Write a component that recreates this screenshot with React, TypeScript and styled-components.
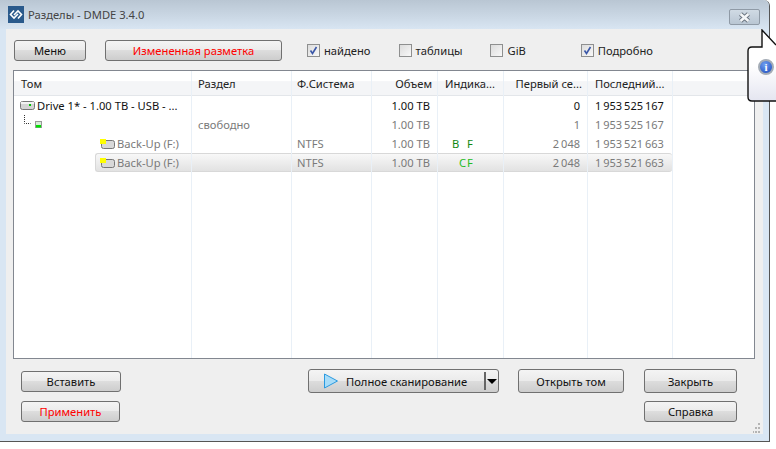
import React from 'react';
import styled, { createGlobalStyle } from 'styled-components';

const GlobalStyle = createGlobalStyle`
  html, body {
    margin: 0;
    background: #fff;
  }
  body {
    width: 776px;
    height: 449px;
    overflow: hidden;
    font-family: "Noto Sans", "Liberation Sans", sans-serif;
    font-size: 11.2px;
    color: #111;
  }
`;

const Page = styled.div`
  position: relative;
  width: 776px;
  height: 449px;
`;

const Window = styled.div`
  width: 770px;
  height: 442px;
  box-sizing: border-box;
  display: flex;
  flex-direction: column;
  background: #d9e6f3;
  border-right: 1px solid #555;
  border-bottom: 1px solid #555;
  border-top-right-radius: 6px;
`;

const TitleBar = styled.div`
  height: 29px;
  flex: none;
  display: flex;
  align-items: center;
  gap: 4px;
  padding: 0 9px 0 8px;
  background: linear-gradient(#b9c6d3, #d8e5f2);
  border-top-right-radius: 6px;
  color: #444;
`;

const Title = styled.span`
  flex: 1;
`;

const CloseButton = styled.div`
  width: 31px;
  height: 16px;
  box-sizing: border-box;
  margin-top: 5px;
  border: 1px solid #8f9aa6;
  border-radius: 2px;
  background: linear-gradient(#d0dae4, #b9c6d3);
  display: flex;
  align-items: center;
  justify-content: center;
`;

const Client = styled.div`
  flex: 1;
  margin: 0 6px 7px;
  background: #efefef;
  display: flex;
  flex-direction: column;
  position: relative;
`;

const Toolbar = styled.div`
  height: 41px;
  flex: none;
  display: flex;
  align-items: center;
  padding: 2px 0 0 8px;
  box-sizing: border-box;
`;

const Button = styled.button<{ $width: number; $red?: boolean; $tall?: boolean; $gap?: number }>`
  width: ${p => p.$width}px;
  height: ${p => (p.$tall ? 24 : 21)}px;
  margin-left: ${p => p.$gap ?? 0}px;
  flex: none;
  padding: 0;
  box-sizing: border-box;
  border: 1px solid #707070;
  border-radius: 3px;
  background: linear-gradient(#f4f4f4 0, #ebebeb 48%, #dddddd 50%, #cdcdcd 100%);
  color: ${p => (p.$red ? '#ff0000' : '#111')};
  font: inherit;
  white-space: nowrap;
  display: flex;
  align-items: center;
  justify-content: center;
`;

const CheckLabel = styled.label<{ $left: number }>`
  margin-left: ${p => p.$left}px;
  display: flex;
  align-items: center;
  gap: 4px;
  color: #222;
`;

const CheckBox = styled.span`
  width: 11px;
  height: 11px;
  border: 1px solid #8e8f8f;
  background: linear-gradient(135deg, #dcdcdc, #f8f8f8);
  display: flex;
  align-items: center;
  justify-content: center;
`;

const TableBox = styled.div`
  margin: 0 8px 0 7px;
  height: 289px;
  flex: none;
  box-sizing: border-box;
  border: 1px solid #828790;
  background: #fff;
  display: flex;
  overflow: hidden;
`;

const TableColumn = styled.div<{ $width?: number }>`
  ${p => (p.$width ? `width: ${p.$width}px; flex: none;` : 'flex: 1;')}
  display: flex;
  flex-direction: column;
  border-right: 1px solid #e9f0f7;
  box-sizing: border-box;
  &:last-child {
    border-right: none;
  }
`;

const HeaderCell = styled.div<{ $align: string; $pad: number }>`
  height: 25px;
  flex: none;
  box-sizing: border-box;
  padding: 1px 5px 0 ${p => p.$pad}px;
  display: flex;
  align-items: center;
  justify-content: ${p => p.$align};
  background: linear-gradient(#ffffff 0, #ffffff 42%, #f4f5f7 44%, #f4f5f7 100%);
  border-bottom: 1px solid #e3e6ea;
  white-space: nowrap;
  color: #222;
  overflow: hidden;
`;

const Cell = styled.div<{
  $align: string;
  $tone: string;
  $pad: number;
  $selected?: boolean;
  $indent?: number;
  $numeric?: boolean;
  $rightEnd?: boolean;
}>`
  height: 19px;
  flex: none;
  box-sizing: border-box;
  margin-left: ${p => p.$indent ?? 0}px;
  padding: 0 7px 0 ${p => p.$pad}px;
  display: flex;
  align-items: center;
  gap: 2px;
  justify-content: ${p => p.$align};
  color: ${p => p.$tone};
  white-space: nowrap;
  overflow: hidden;
  ${p => (p.$numeric ? 'font-size: 11px; word-spacing: -0.9px;' : '')}
  svg {
    flex: none;
  }
  ${p =>
    p.$selected &&
    `background: linear-gradient(#f8f8f8, #e2e2e2);
     border-top: 1px solid #d8d8d8;
     border-bottom: 1px solid #d8d8d8;`}
  ${p => (p.$selected && p.$indent ? 'border-left: 1px solid #d8d8d8; border-radius: 3px 0 0 3px;' : '')}
  ${p => (p.$rightEnd ? 'border-radius: 0 3px 3px 0;' : '')}
`;

const TreeCell = styled.span`
  align-self: flex-start;
  display: flex;
`;

const Flags = styled.span<{ $light?: boolean; $offset: number }>`
  padding-left: ${p => p.$offset}px;
  color: ${p => (p.$light ? '#22bb22' : '#118811')};
  letter-spacing: ${p => (p.$light ? '1px' : '0')};
  word-spacing: -0.3px;
  white-space: pre;
`;

const Footer = styled.div`
  flex: 1;
  display: grid;
  grid-template-columns: 287px 210px 126px 1fr;
  grid-template-rows: 24px 21px;
  row-gap: 8px;
  padding: 10px 0 0 15px;
`;

const SideButton = styled(Button)`
  margin-top: 2px;
`;

const SplitButton = styled(Button)`
  justify-content: flex-start;
  padding-left: 14px;
  gap: 7px;
`;

const SplitLabel = styled.span`
  flex: 1;
  text-align: left;
`;

const SplitArrow = styled.span`
  width: 12px;
  height: 18px;
  border-left: 2px solid #666;
  display: flex;
  align-items: center;
  justify-content: center;
  &::after {
    content: '';
    border-left: 5px solid transparent;
    border-right: 5px solid transparent;
    border-top: 5px solid #000;
  }
`;

const Grip = styled.svg`
  position: absolute;
  right: 3px;
  bottom: 1px;
`;

const Balloon = styled.div`
  position: absolute;
  left: 747px;
  top: 29px;
  width: 29px;
  height: 73px;
`;

const BalloonIcon = styled.div`
  position: absolute;
  left: 11px;
  top: 30px;
  width: 16px;
  height: 16px;
  border-radius: 50%;
  border: 2px solid #a4acb6;
  box-sizing: border-box;
  background: radial-gradient(circle at 40% 30%, #6f9ff0, #1a48bc);
  color: #fff;
  font: bold 11px/12px "Liberation Serif", serif;
  text-align: center;
`;

interface ColumnDef {
  title: string;
  width?: number;
  align: string;
  pad: number;
}

const columns: ColumnDef[] = [
  { title: 'Том', width: 178, align: 'flex-start', pad: 7 },
  { title: 'Раздел', width: 100, align: 'flex-start', pad: 6 },
  { title: 'Ф.Система', width: 80, align: 'flex-start', pad: 5 },
  { title: 'Объем', width: 66, align: 'flex-end', pad: 7 },
  { title: 'Индика...', width: 66, align: 'flex-start', pad: 7 },
  { title: 'Первый се...', width: 84, align: 'flex-end', pad: 7 },
  { title: 'Последний...', width: 85, align: 'flex-start', pad: 7 },
  { title: '', align: 'flex-start', pad: 7 },
];

const rows = [
  ['', '', '', '1.00 TB', '', '0', '1 953 525 167'],
  ['', 'свободно', '', '1.00 TB', '', '1', '1 953 525 167'],
  ['', '', 'NTFS', '1.00 TB', 'B   F', '2 048', '1 953 521 663'],
  ['', '', 'NTFS', '1.00 TB', 'CF', '2 048', '1 953 521 663'],
];

const DiskIcon = () => (
  <svg width="15" height="9" viewBox="0 0 15 9">
    <rect x="0.5" y="0.5" width="14" height="8" rx="2" fill="#d4d4d4" stroke="#777" />
    <rect x="1" y="1" width="13" height="2" fill="#f2f2f2" />
    <rect x="9" y="3" width="2" height="2" fill="#00c000" />
  </svg>
);

const VolumeIcon = () => (
  <svg width="15" height="10" viewBox="0 0 15 10">
    <rect x="1.5" y="1.5" width="13" height="8" rx="2" fill="#d8d8d8" stroke="#777" />
    <rect x="0" y="0" width="6" height="5" fill="#ffff00" />
  </svg>
);

const TreeIcon = () => (
  <svg width="23" height="14" viewBox="0 0 23 14">
    <path d="M4.5 0v8.5h6" stroke="#333" strokeDasharray="1 1" fill="none" />
    <rect x="15.5" y="6.5" width="6" height="6" fill="#d8ecd8" stroke="#999" />
    <rect x="16" y="10" width="5" height="2.5" fill="#00e000" />
  </svg>
);

const CheckMark = () => (
  <svg width="9" height="9" viewBox="0 0 9 9">
    <path d="M1.5 4.5l2 3 4-6.5" stroke="#3a57a8" strokeWidth="1.6" fill="none" />
  </svg>
);

const firstCell = (row: number) => {
  if (row === 0)
    return (
      <>
        <DiskIcon />
        Drive 1* - 1.00 TB - USB - ...
      </>
    );
  if (row === 1)
    return (
      <TreeCell>
        <TreeIcon />
      </TreeCell>
    );
  return (
    <>
      <VolumeIcon />
      Back-Up (F:)
    </>
  );
};

const firstCellPad = (row: number) => (row === 2 ? 86 : row === 3 ? 4 : 6);

const App: React.FC = () => (
  <Page>
    <GlobalStyle />
    <Window>
      <TitleBar>
        <svg width="16" height="17" viewBox="0 0 16 17">
          <rect width="16" height="17" fill="#2a5a8c" />
          <path d="M6 4.5l-3.5 4 3.5 3.5 4-4" fill="none" stroke="#fff" strokeWidth="1.6" />
          <path d="M10 12.5l3.5-4-3.5-3.5-4 4" fill="none" stroke="#fff" strokeWidth="1.6" />
        </svg>
        <Title>Разделы - DMDE 3.4.0</Title>
        <CloseButton>
          <svg width="13" height="11" viewBox="0 0 13 11">
            <path d="M2.5 2l8 7M10.5 2l-8 7" stroke="#6a7480" strokeWidth="4.5" />
            <path d="M2.5 2l8 7M10.5 2l-8 7" stroke="#f4f6f8" strokeWidth="2.6" />
          </svg>
        </CloseButton>
      </TitleBar>
      <Client>
        <Toolbar>
          <Button $width={72}>Меню</Button>
          <Button $width={177} $red $gap={19}>
            Измененная разметка
          </Button>
          <CheckLabel $left={25}>
            <CheckBox>
              <CheckMark />
            </CheckBox>
            найдено
          </CheckLabel>
          <CheckLabel $left={28}>
            <CheckBox />
            таблицы
          </CheckLabel>
          <CheckLabel $left={28}>
            <CheckBox />
            GiB
          </CheckLabel>
          <CheckLabel $left={55}>
            <CheckBox>
              <CheckMark />
            </CheckBox>
            Подробно
          </CheckLabel>
        </Toolbar>
        <TableBox>
          {columns.map((col, c) => (
            <TableColumn key={col.title} $width={col.width}>
              <HeaderCell $align={col.align} $pad={col.pad}>
                {col.title}
              </HeaderCell>
              {col.width &&
                rows.map((row, r) => (
                  <Cell
                    key={r}
                    $align={col.align}
                    $tone={r === 0 ? '#111' : '#7a7a7a'}
                    $pad={c === 0 ? firstCellPad(r) : col.pad}
                    $selected={r === 3}
                    $indent={c === 0 && r === 3 ? 81 : undefined}
                    $numeric={c >= 5}
                    $rightEnd={c === 6 && r === 3}
                  >
                    {c === 0 ? (
                      firstCell(r)
                    ) : c === 4 ? (
                      <Flags $light={r === 3} $offset={r === 3 ? 14 : 7}>
                        {row[c]}
                      </Flags>
                    ) : (
                      row[c]
                    )}
                  </Cell>
                ))}
            </TableColumn>
          ))}
        </TableBox>
        <Footer>
          <SideButton $width={100}>Вставить</SideButton>
          <SplitButton $width={191} $tall>
            <svg width="16" height="16" viewBox="0 0 16 16">
              <path d="M1.5 1v14l13-7z" fill="#a8dcf8" stroke="#2a9ae0" />
            </svg>
            <SplitLabel>Полное сканирование</SplitLabel>
            <SplitArrow />
          </SplitButton>
          <Button $width={106} $tall>
            Открыть том
          </Button>
          <Button $width={93} $tall>
            Закрыть
          </Button>
          <Button $width={99} $red>
            Применить
          </Button>
          <span />
          <span />
          <Button $width={93}>Справка</Button>
        </Footer>
        <Grip width="7" height="10" viewBox="0 0 7 10">
          <g fill="#b4b4b4">
            <rect x="5" y="0" width="2" height="2" />
            <rect x="5" y="4" width="2" height="2" />
            <rect x="2" y="4" width="2" height="2" />
            <rect x="5" y="8" width="2" height="2" />
            <rect x="2" y="8" width="2" height="2" />
            <rect x="0" y="8" width="1" height="2" />
          </g>
        </Grip>
      </Client>
    </Window>
    <Balloon>
      <svg width="29" height="73" viewBox="0 0 29 73">
        <defs>
          <linearGradient id="balloonFill" x1="0" y1="0" x2="0" y2="1">
            <stop offset="0.5" stopColor="#ffffff" />
            <stop offset="1" stopColor="#e4e5f0" />
          </linearGradient>
        </defs>
        <path
          d="M29 72H5Q1 72 1 68V22Q1 18 5 18H15V1L29 16"
          fill="url(#balloonFill)"
          stroke="#111"
          strokeWidth="1.4"
        />
      </svg>
      <BalloonIcon>i</BalloonIcon>
    </Balloon>
  </Page>
);

export default App;
